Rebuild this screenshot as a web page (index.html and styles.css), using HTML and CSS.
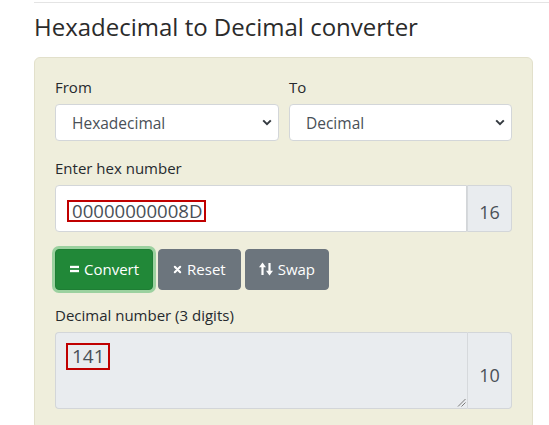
FILE: index.html
```html
<!DOCTYPE html>
<html lang="en">
<head>
<meta charset="utf-8">
<title>Hexadecimal to Decimal converter</title>
<link rel="stylesheet" href="styles.css">
</head>
<body>
<div class="page">
  <h1 class="title">Hexadecimal to Decimal converter</h1>
  <div class="card">
    <div class="row2">
      <div class="field">
        <label class="lbl">From</label>
        <select class="sel"><option>Hexadecimal</option></select>
      </div>
      <div class="field">
        <label class="lbl">To</label>
        <select class="sel"><option>Decimal</option></select>
      </div>
    </div>

    <label class="lbl lbl-hex">Enter hex number</label>
    <div class="igroup">
      <div class="ctrl"><span class="mark mark-in">00000000008D</span></div>
      <div class="addon addon-in">16</div>
    </div>

    <div class="btns">
      <button class="btn btn-success"><svg class="ico" width="9" height="8" viewBox="0 0 9 8"><rect x="0" y="0.8" width="9" height="2.3" fill="#fff"/><rect x="0" y="4.9" width="9" height="2.3" fill="#fff"/></svg>Convert</button>
      <button class="btn btn-gray"><svg class="ico" width="9" height="9" viewBox="0 0 10 10"><path d="M2 2l6 6M8 2l-6 6" stroke="#fff" stroke-width="2.3" stroke-linecap="round" fill="none"/></svg>Reset</button>
      <button class="btn btn-gray btn-swap"><svg class="ico" width="14" height="14" viewBox="0 0 14 14"><path d="M3.5 13V4" stroke="#fff" stroke-width="2.2" fill="none"/><path d="M0 5.2L3.5 0.6L7 5.2Z" fill="#fff"/><path d="M10.5 1V10" stroke="#fff" stroke-width="2.2" fill="none"/><path d="M7 8.8L10.5 13.4L14 8.8Z" fill="#fff"/></svg>Swap</button>
    </div>

    <label class="lbl lbl-dec">Decimal number (3 digits)</label>
    <div class="igroup">
      <div class="tarea">
        <span class="mark mark-out">141</span>
        <svg class="grip" width="9" height="9" viewBox="0 0 9 9"><path d="M1 8.5L8.5 1M4.5 8.5L8.5 4.5" stroke="#7a7a7a" stroke-width="1" fill="none"/></svg>
      </div>
      <div class="addon addon-out">10</div>
    </div>
  </div>
</div>
</body>
</html>
```

FILE: styles.css
```css
* {
  box-sizing: border-box;
}

body {
  margin: 0;
  padding-top: 2px;
  background: #ffffff;
  color: #212529;
  font-family: "Open Sans", "Segoe UI", "Noto Sans", sans-serif;
}

.page {
  margin-left: 34px;
  border-top: 1px solid #e4e4e4;
}

.title {
  margin: 10px 0 15px;
  font-size: 24px;
  font-weight: 400;
  line-height: 1.2;
  color: #2b2b2b;
}

.card {
  width: 499px;
  background: #efeedc;
  border: 1px solid #e2e0cb;
  border-radius: 6px;
  padding: 18px 20px 20px;
}

.row2 {
  display: grid;
  grid-template-columns: 224px 223px;
  column-gap: 10px;
}

.lbl {
  display: block;
  font-size: 15px;
  line-height: 22px;
  margin-bottom: 6px;
  color: #262a2e;
}

.lbl-hex {
  margin-top: 16px;
}

.lbl-dec {
  margin-top: 14px;
}

.sel {
  appearance: none;
  -webkit-appearance: none;
  display: block;
  width: 100%;
  height: 37px;
  margin: 0;
  padding: 2px 24px 0 16px;
  border: 1px solid #d3d6d9;
  border-radius: 4px;
  background: #ffffff url("data:image/svg+xml,%3Csvg xmlns='http://www.w3.org/2000/svg' width='10' height='7' viewBox='0 0 10 7'%3E%3Cpath d='M1.2 1.4L5 5.2L8.8 1.4' fill='none' stroke='%23343a40' stroke-width='2'/%3E%3C/svg%3E") no-repeat right 6px center / 10px 7px;
  font-family: inherit;
  font-size: 15.5px;
  color: #495057;
}

.igroup {
  display: flex;
}

.ctrl {
  flex: 1;
  height: 47px;
  background: #ffffff;
  border: 1px solid #d3d6d9;
  border-radius: 4px 0 0 4px;
  padding: 14px 11px 0;
  font-size: 18.6px;
  color: #495057;
}

.mark {
  display: inline-block;
  border: 2px solid #c00000;
  vertical-align: top;
}

.mark-in {
  line-height: 18px;
  padding: 0 2px 0 3px;
}

.mark-out {
  line-height: 23px;
  padding: 0 3px 0 4px;
}

.addon {
  width: 45px;
  background: #e9ecef;
  border: 1px solid #d3d6d9;
  border-left-color: #d6d9dc;
  border-radius: 0 4px 4px 0;
  text-align: center;
  font-size: 18px;
  line-height: 24px;
  color: #495057;
}

.addon-in {
  padding-top: 14px;
}

.addon-out {
  padding-top: 30px;
}

.tarea {
  position: relative;
  flex: 1;
  height: 77px;
  background: #e9ecef;
  border: 1px solid #d3d6d9;
  border-right: 0;
  border-radius: 4px 0 0 4px;
  padding: 10px 10px 0;
  font-size: 19px;
  color: #495057;
}

.grip {
  position: absolute;
  right: 1px;
  bottom: 1px;
}

.btns {
  display: flex;
  gap: 4px;
  margin-top: 17px;
}

.btn {
  display: inline-flex;
  align-items: center;
  gap: 5px;
  height: 41px;
  padding: 0 14px;
  border-radius: 4px;
  border: 1px solid transparent;
  font-family: inherit;
  font-size: 15px;
  color: #ffffff;
}

.btn-success {
  padding: 0 13px 0 14px;
  background: #218838;
  border-color: #1e7e34;
  box-shadow: 0 0 0 3px rgba(72, 180, 97, 0.5);
  margin-right: 1px;
}

.btn-gray {
  background: #6c757d;
  border-color: #6c757d;
}

.btn-swap {
  padding: 0 13px;
}

.ico {
  flex: none;
}
```
